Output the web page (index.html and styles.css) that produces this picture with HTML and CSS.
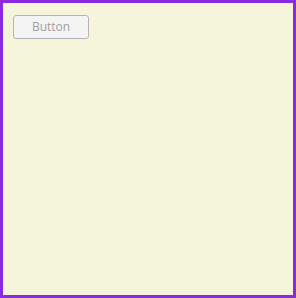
FILE: index.html
```html
<!DOCTYPE html>
<html lang="en">
<head>
    <meta charset="UTF-8">
    <title>Button</title>
    <link rel="stylesheet" href="styles.css">
</head>
<body>
    <div class="frame">
        <button class="btn" disabled>Button</button>
    </div>
</body>
</html>
```

FILE: styles.css
```css
* {
    margin: 0;
    padding: 0;
    box-sizing: border-box;
}

html, body {
    width: 296px;
    height: 298px;
}

.frame {
    width: 296px;
    height: 298px;
    border: 3px solid #8a2be2;
    background-color: #f5f5dc;
    padding: 12px 10px;
}

.btn {
    display: block;
    width: 76px;
    height: 24px;
    border: 1px solid #b4b4b4;
    border-radius: 3px;
    background-color: #f4f4f4;
    color: #a0a0a0;
    font-family: "Open Sans", "Noto Sans", sans-serif;
    font-size: 12px;
    line-height: 20px;
    text-align: center;
}
```
